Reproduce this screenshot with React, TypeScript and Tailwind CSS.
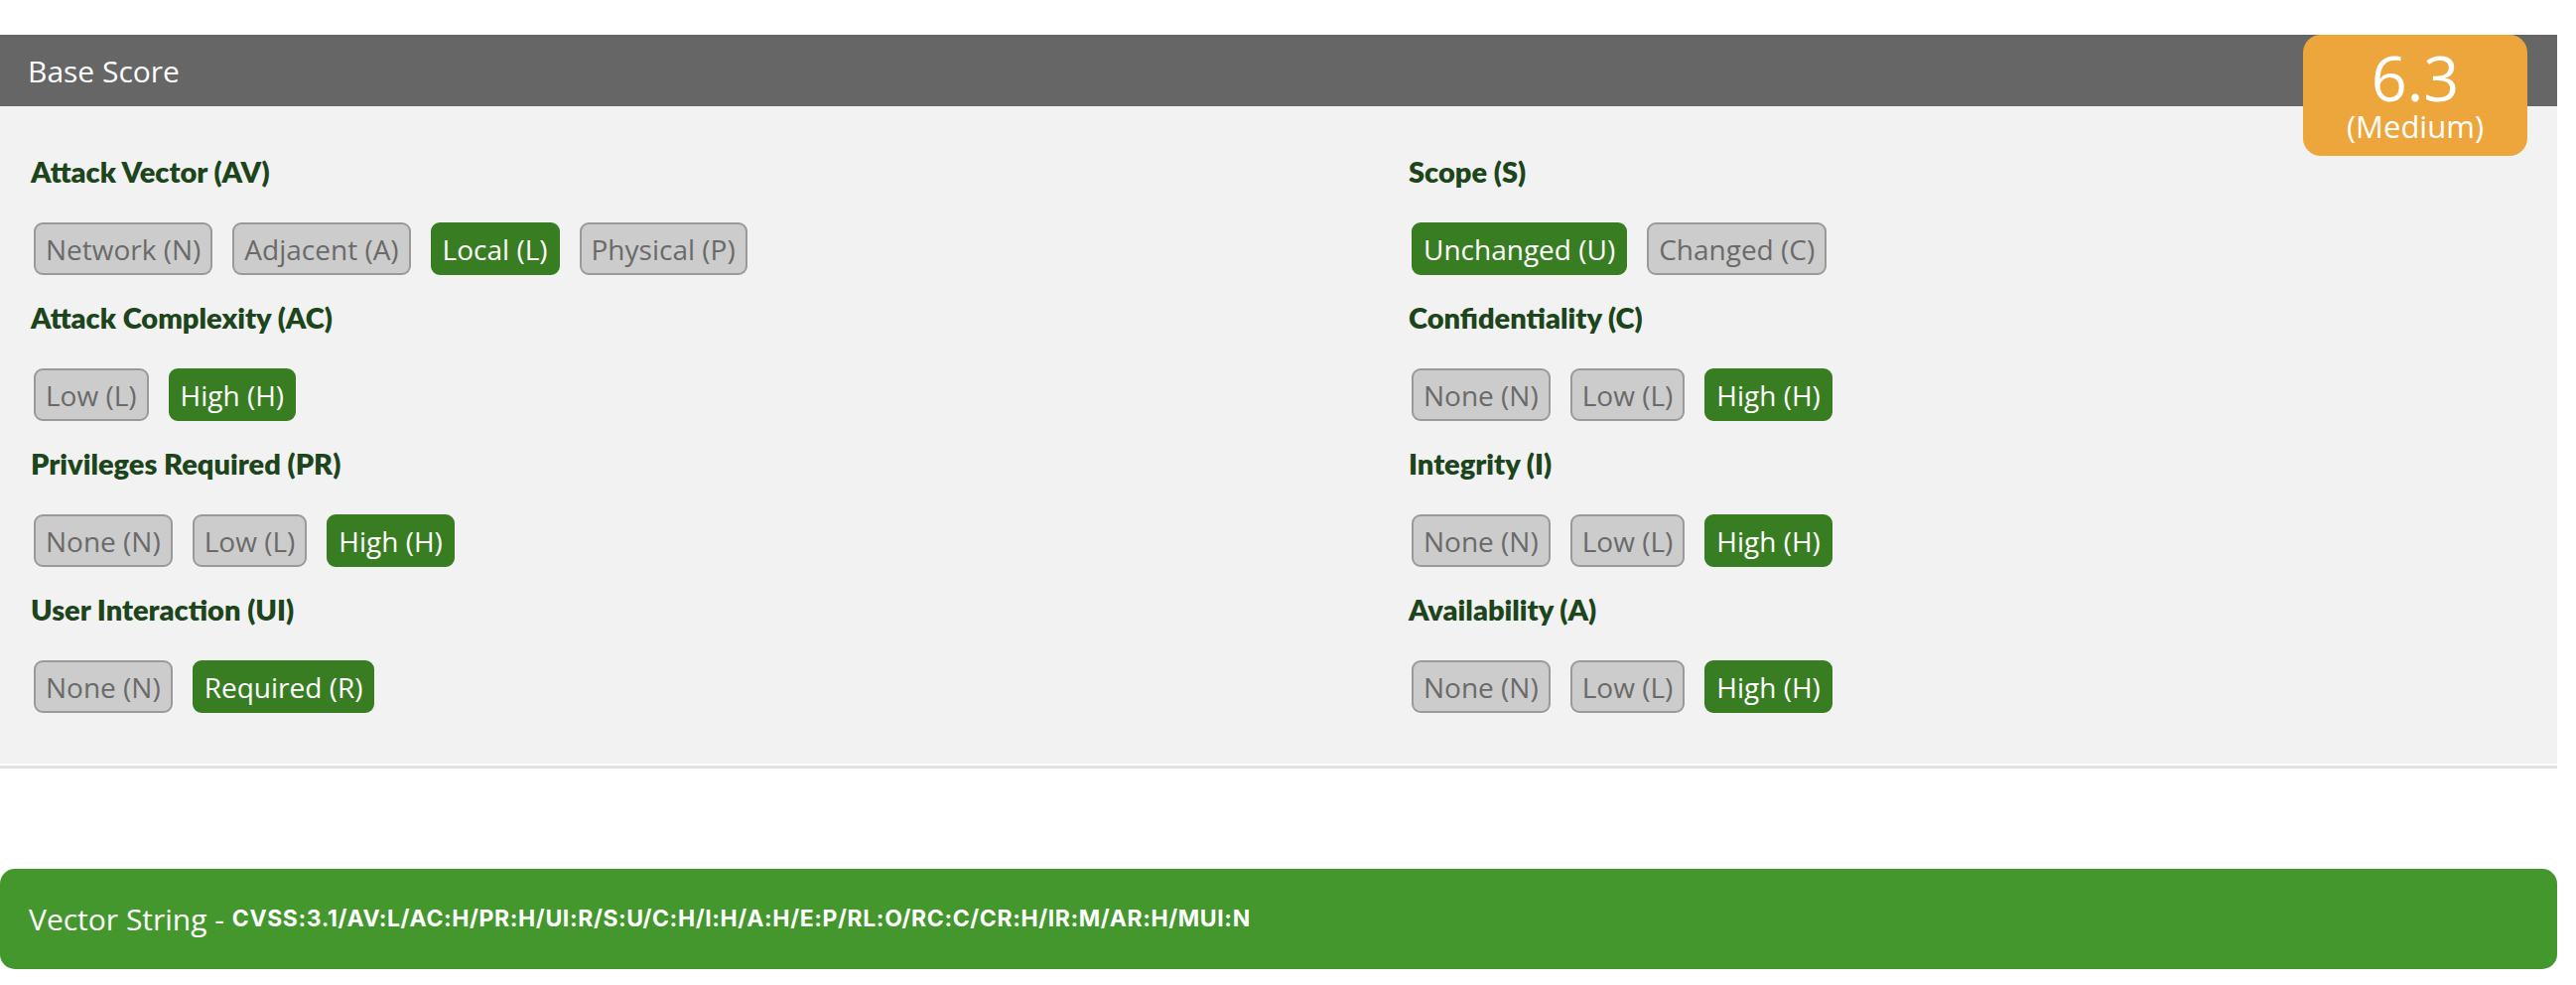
import React from "react";

type Metric = { title: string; options: { label: string; on?: boolean }[] };

const left: Metric[] = [
  {
    title: "Attack Vector (AV)",
    options: [
      { label: "Network (N)" },
      { label: "Adjacent (A)" },
      { label: "Local (L)", on: true },
      { label: "Physical (P)" },
    ],
  },
  {
    title: "Attack Complexity (AC)",
    options: [{ label: "Low (L)" }, { label: "High (H)", on: true }],
  },
  {
    title: "Privileges Required (PR)",
    options: [{ label: "None (N)" }, { label: "Low (L)" }, { label: "High (H)", on: true }],
  },
  {
    title: "User Interaction (UI)",
    options: [{ label: "None (N)" }, { label: "Required (R)", on: true }],
  },
];

const right: Metric[] = [
  {
    title: "Scope (S)",
    options: [{ label: "Unchanged (U)", on: true }, { label: "Changed (C)" }],
  },
  {
    title: "Confidentiality (C)",
    options: [{ label: "None (N)" }, { label: "Low (L)" }, { label: "High (H)", on: true }],
  },
  {
    title: "Integrity (I)",
    options: [{ label: "None (N)" }, { label: "Low (L)" }, { label: "High (H)", on: true }],
  },
  {
    title: "Availability (A)",
    options: [{ label: "None (N)" }, { label: "Low (L)" }, { label: "High (H)", on: true }],
  },
];

function Section({ m }: { m: Metric }) {
  return (
    <div className="flex flex-col">
      <div
        className="h-[35px] leading-[35px] text-[29px] font-extrabold text-[#1c451b] whitespace-nowrap"
        style={{ fontFamily: "Lato, sans-serif" }}
      >
        {m.title}
      </div>
      <div className="mt-[34px] flex gap-[20px] pl-[3px]">
        {m.options.map((o) => (
          <div
            key={o.label}
            className={
              o.on
                ? "h-[53px] flex items-center px-[10px] rounded-[9px] border-2 border-[#387d22] bg-[#387d22] text-white text-[28px] whitespace-nowrap"
                : "h-[53px] flex items-center px-[10px] rounded-[9px] border-2 border-[#9a9a9a] bg-[#cccccc] text-[#6a6a6a] text-[28px] whitespace-nowrap"
            }
            style={{ fontFamily: "'Open Sans', sans-serif" }}
          >
            <span>{o.label}</span>
          </div>
        ))}
      </div>
    </div>
  );
}

export default function App() {
  return (
    <div className="w-[2576px] bg-white pt-[35px] pb-[15px]" style={{ fontFamily: "'Open Sans', sans-serif" }}>
      <div className="relative">
        <div className="h-[72px] bg-[#666666] flex items-center pl-[28px] text-white text-[30px]">
          Base Score
        </div>
        <div className="bg-[#f2f2f2] pt-[48px] pb-[51px] pl-[31px] flex">
          <div className="w-[1388px] flex flex-col gap-[25px]">
            {left.map((m) => (
              <Section key={m.title} m={m} />
            ))}
          </div>
          <div className="flex-1 flex flex-col gap-[25px]">
            {right.map((m) => (
              <Section key={m.title} m={m} />
            ))}
          </div>
        </div>
        <div className="mt-[2px] h-[3px] bg-[#e3e3e3]" />
        <div className="absolute top-0 right-[30px] w-[226px] h-[122px] rounded-[18px] bg-[#eda63c] text-white flex flex-col items-center pt-[13px]">
          <div className="text-[63px] leading-[60px]">6.3</div>
          <div className="mt-[4px] text-[31px] leading-[30px]">(Medium)</div>
        </div>
      </div>
      <div className="mt-[101px] h-[101px] rounded-[15px] bg-[#44972d] flex items-center pl-[29px] text-white whitespace-nowrap">
        <span className="text-[30px]">Vector String -&nbsp;</span>
        <span
          className="text-[23px] font-bold tracking-[0.6px]"
          style={{ fontFamily: "Inter, sans-serif" }}
        >
          CVSS:3.1/AV:L/AC:H/PR:H/UI:R/S:U/C:H/I:H/A:H/E:P/RL:O/RC:C/CR:H/IR:M/AR:H/MUI:N
        </span>
      </div>
    </div>
  );
}
